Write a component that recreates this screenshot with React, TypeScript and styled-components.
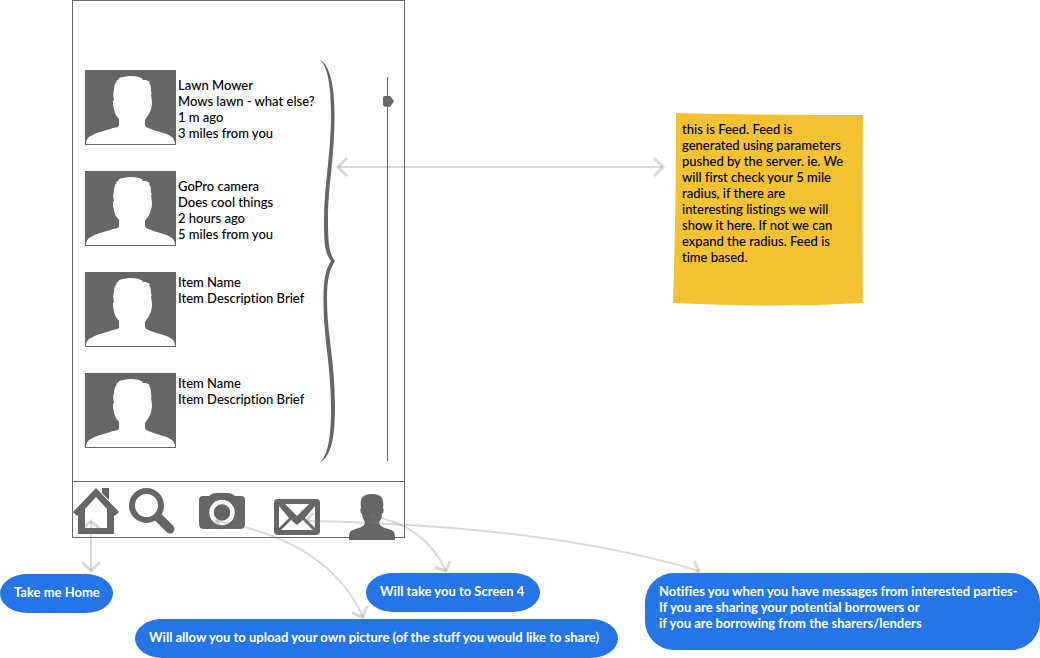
import React from "react";
import styled, { createGlobalStyle } from "styled-components";

const INK = "#666666";
const BLUE = "#2575e6";
const YELLOW = "#f2c232";

const GlobalStyle = createGlobalStyle`
  * { box-sizing: border-box; }
  body {
    margin: 0;
    background: #fff;
    color: #000;
    font: 500 13px/16px Lato, "Noto Sans", sans-serif;
    font-variant-ligatures: none;
  }
`;

const Canvas = styled.main`
  position: relative;
  min-height: 658px;
  overflow: hidden;
`;

const Screen = styled.section`
  position: absolute;
  left: 72px;
  top: 0;
  width: 333px;
  border: 1px solid ${INK};
`;

const FeedArea = styled.div`
  display: flex;
  padding: 59px 10px 19px 12px;
`;

const Feed = styled.ul`
  flex: 1;
  display: flex;
  flex-direction: column;
  gap: 26px;
  margin: 0;
  padding: 10px 0 0;
  list-style: none;
`;

const FeedItem = styled.li`
  display: flex;
  gap: 2px;
`;

const Details = styled.div<{ $brief?: boolean }>`
  padding-top: ${(p) => (p.$brief ? 2 : 7)}px;
  white-space: nowrap;
`;

const Line = styled.p`
  margin: 0;
`;

const Brace = styled.svg`
  display: block;
  flex: none;
  margin-right: 47px;
`;

const Scroll = styled.input`
  appearance: none;
  writing-mode: vertical-lr;
  width: 11px;
  height: 384px;
  margin: 17px 0 0;
  background: linear-gradient(${INK}, ${INK}) 4px 0 / 1px 100% no-repeat;

  &::-webkit-slider-thumb {
    appearance: none;
    width: 11px;
    height: 11px;
    background: ${INK};
    clip-path: polygon(0 15%, 15% 0, 65% 0, 100% 50%, 65% 100%, 15% 100%, 0 85%);
  }
`;

const TabBar = styled.nav`
  display: grid;
  grid-template-columns: 56px 70px 75px 75px 46px;
  height: 56px;
  border-top: 1px solid ${INK};
`;

const Tab = styled.button`
  width: 46px;
  height: 58px;
  padding: 0;
  border: 0;
  background: none;
  color: ${INK};

  svg {
    display: block;
    overflow: visible;
  }
`;

const Note = styled.aside`
  position: absolute;
  left: 673px;
  top: 112px;
  width: 191px;
  min-height: 194px;
  padding: 9px 18px 40px 9px;
`;

const NotePaper = styled.svg`
  position: absolute;
  inset: 0;
  width: 100%;
  height: 100%;
`;

const NoteText = styled.p`
  position: relative;
  margin: 0;
`;

const Callout = styled.div<{ $x: number; $y: number; $w: number; $tall?: boolean }>`
  position: absolute;
  left: ${(p) => p.$x}px;
  top: ${(p) => p.$y}px;
  min-width: ${(p) => p.$w}px;
  padding: ${(p) => (p.$tall ? "10px 12px 19px 14px" : "10px 12px 13px 14px")};
  border-radius: ${(p) => (p.$tall ? "29px" : "28px / 20px")};
  background: ${BLUE};
  color: #fff;
  font-weight: 700;
  white-space: nowrap;
`;

const Arrows = styled.svg`
  position: absolute;
  left: 0;
  top: 0;
  pointer-events: none;
`;

const Person = () => (
  <svg width="91" height="75" viewBox="0 0 91 75" role="img" aria-label="Item picture">
    <rect width="91" height="75" fill={INK} />
    <path
      fill="#fff"
      d="M1 74C1 70 3 67 6 66C12 62 20 61 28 58C32 57 34 57 34 55V49C33 47 31 46 30 43C29 41 29 38 28 35L28 31L29 30C28 26 28 23 29 20C29 16 30 13 32 12L31 11L33 10L34 8C38 7 41 6 46 6C51 6 55 7 58 9L57 10L61 10L65 12L64 13C66 15 66 18 66 22L67 23L66 24L67 32C67 36 66 40 64 44C63 46 61 48 60 50V55C61 58 64 58 66 59C73 62 82 63 87 67C89 69 90 71 90 74Z"
    />
  </svg>
);

const items = [
  ["Lawn Mower", "Mows lawn - what else?", "1 m ago", "3 miles from you"],
  ["GoPro camera", "Does cool things", "2 hours ago", "5 miles from you"],
  ["Item Name", "Item Description Brief"],
  ["Item Name", "Item Description Brief"],
];

const HomeIcon = () => (
  <svg width="46" height="58" viewBox="0 0 46 58" fill={INK}>
    <path d="M29 6H36V18L29 11Z" />
    <path fillRule="evenodd" d="M23 6L46 30L42 34L41 33V52H5V33L4 34L0 30ZM23 15L12 27V46H34V27Z" />
  </svg>
);

const SearchIcon = () => (
  <svg width="46" height="58" viewBox="0 0 46 58" fill="none" stroke={INK}>
    <circle cx="17.5" cy="23.5" r="14.5" strokeWidth="6" />
    <path d="M29 35L41 47" strokeWidth="9" strokeLinecap="round" />
  </svg>
);

const CameraIcon = () => (
  <svg width="46" height="58" viewBox="0 0 46 58" fill={INK}>
    <path d="M4 14H10L13 12Q15 11 17 11H29Q31 11 33 12L36 14H42Q46 14 46 18V42Q46 47 41 47H5Q0 47 0 42V18Q0 14 4 14Z" />
    <circle cx="23" cy="30.5" r="10.5" stroke="#fff" strokeWidth="4.5" />
  </svg>
);

const MailIcon = () => (
  <svg width="46" height="58" viewBox="0 0 46 58" fill="none">
    <rect y="17" width="46" height="36" rx="4" fill={INK} />
    <path d="M5 24V46L15 36ZM11 22H35L23 34ZM41 24V46L31 36ZM7 48L17 38L23 43L29 38L39 48Z" fill="#fff" />
  </svg>
);

const UserIcon = () => (
  <svg width="46" height="58" viewBox="0 0 46 58" fill={INK}>
    <path d="M0 58C0 53 0 49 4 48C9 46 16 45 16 40C14 37 13 34 13 32C11 31 11 27 12 26C11 18 12 12 23 12C34 12 35 18 34 26C35 27 35 31 33 32C33 35 32 38 30 40C30 45 37 46 42 48C46 49 46 53 46 58Z" />
  </svg>
);

const tabs = [
  { label: "Home", Icon: HomeIcon },
  { label: "Search", Icon: SearchIcon },
  { label: "Camera", Icon: CameraIcon },
  { label: "Messages", Icon: MailIcon },
  { label: "Profile", Icon: UserIcon },
];

const links = [
  { line: "M338 167H663", heads: "M347 158L338 167L347 176M654 158L663 167L654 176" },
  { line: "M91 521V571", heads: "M83 528L91 521L99 528M82 562L91 571L100 562" },
  { line: "M216 521Q328 540 363 617", heads: "M225 516L216 521L222 529M352 613L363 617L367 606" },
  { line: "M371 516Q425 525 446 571", heads: "M380 511L371 516L377 525M435 567L446 571L450 561" },
  { line: "M306 521Q545 525 699 571", heads: "M313 513L306 521L313 529M689 577L699 571L694 561" },
];

export default function App() {
  return (
    <>
      <GlobalStyle />
      <Canvas>
        <Screen>
          <FeedArea>
            <Feed>
              {items.map((lines, i) => (
                <FeedItem key={i}>
                  <Person />
                  <Details $brief={lines.length < 3}>
                    {lines.map((l) => (
                      <Line key={l}>{l}</Line>
                    ))}
                  </Details>
                </FeedItem>
              ))}
            </Feed>
            <Brace width="16" height="402" viewBox="0 0 16 402" fill={INK}>
              <path d="M0 0C10 5 14.5 25 14.5 55C14.5 100 8 125 8 160C8 182 9 194 15 201C9 210 7 222 7 238C7 275 15 300 15 347C15 378 11 397 0 402C8 395 11 378 11 347C11 305 3.5 280 3.5 240C3.5 221 5 210 11 201C5 193 4 185 4 160C4 125 11 95 11 55C11 27 8 7 0 0Z" />
            </Brace>
            <Scroll type="range" aria-label="Feed position" defaultValue={5} />
          </FeedArea>
          <TabBar>
            {tabs.map(({ label, Icon }) => (
              <Tab key={label} type="button" aria-label={label}>
                <Icon />
              </Tab>
            ))}
          </TabBar>
        </Screen>

        <Note>
          <NotePaper viewBox="0 0 191 194" preserveAspectRatio="none">
            <path fill={YELLOW} d="M3 1Q80 3 190 3Q189 100 190 191Q100 196 0 191Q3 100 3 1Z" />
          </NotePaper>
          <NoteText>
            this is Feed. Feed is generated using parameters pushed by the server. ie. We will first check your 5
            mile radius, if there are interesting listings we will show it here. If not we can expand the radius.
            Feed is time based.
          </NoteText>
        </Note>

        <Callout $x={0} $y={574} $w={113}>Take me Home</Callout>
        <Callout $x={135} $y={619} $w={483}>
          Will allow you to upload your own picture (of the stuff you would like to share)
        </Callout>
        <Callout $x={366} $y={573} $w={174}>Will take you to Screen 4</Callout>
        <Callout $x={645} $y={573} $w={395} $tall>
          <Line>Notifies you when you have messages from interested parties-</Line>
          <Line>If you are sharing your potential borrowers or</Line>
          <Line>if you are borrowing from the sharers/lenders</Line>
        </Callout>

        <Arrows width="1040" height="658" fill="none" stroke="#777" strokeOpacity="0.28" aria-hidden="true">
          {links.map(({ line, heads }) => (
            <g key={line}>
              <path d={line} strokeWidth="2" />
              <path d={heads} strokeWidth="3" />
            </g>
          ))}
        </Arrows>
      </Canvas>
    </>
  );
}
